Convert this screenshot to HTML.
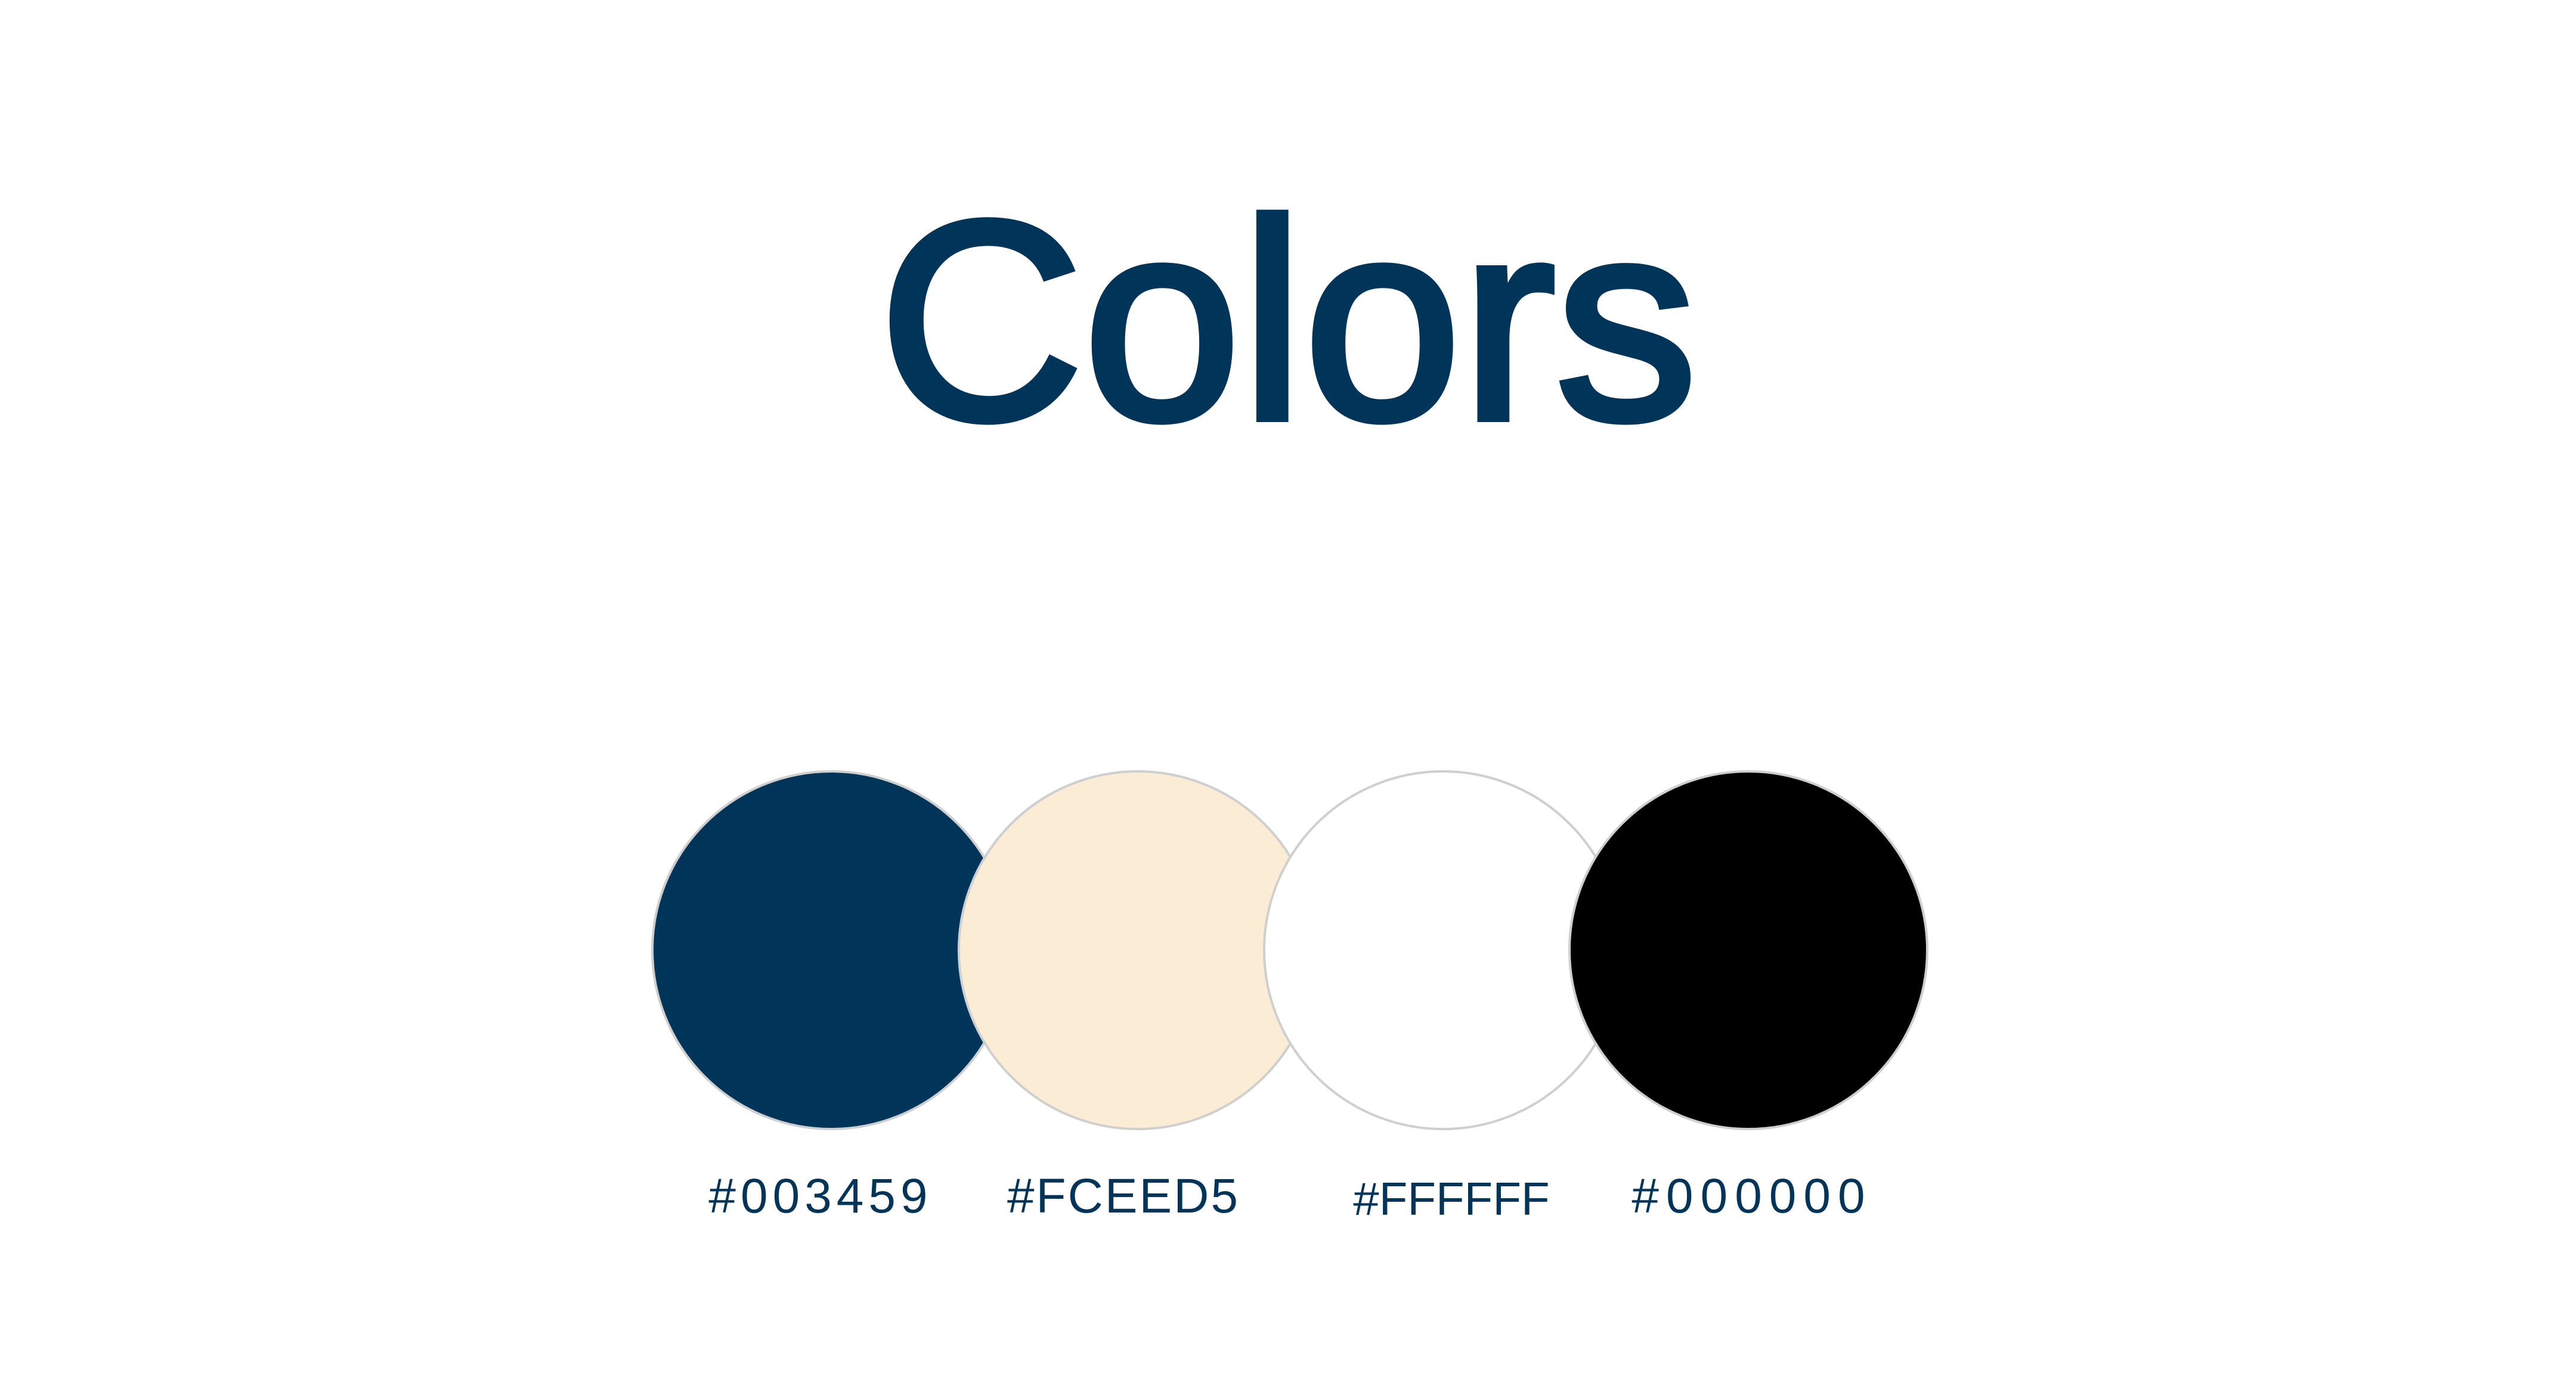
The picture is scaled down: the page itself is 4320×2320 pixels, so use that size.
<!DOCTYPE html>
<html><head><meta charset="utf-8"><style>
html,body{margin:0;padding:0;background:#fff;}
body{width:4320px;height:2320px;position:relative;overflow:hidden;font-family:"Liberation Sans",sans-serif;}
.t{position:absolute;left:0;width:4320px;top:300px;text-align:center;font-size:475px;font-weight:normal;color:#003459;-webkit-text-stroke:12px #003459;letter-spacing:0px;line-height:1;}
.c{position:absolute;width:596px;height:596px;border-radius:50%;border:4px solid #cfcfcf;top:1292px;}
.l{position:absolute;width:600px;text-align:center;color:#003459;font-size:82px;letter-spacing:8px;line-height:1;top:1966px;}
</style></head><body>
<div class="t">Colors</div>
<div class="c" style="left:1092px;background:#003459"></div>
<div class="c" style="left:1606px;background:#fbedd5"></div>
<div class="c" style="left:2118px;background:#fff"></div>
<div class="c" style="left:2630px;background:#000"></div>
<div class="l" style="left:1076px">#003459</div>
<div class="l" style="left:1584px;letter-spacing:3px">#FCEED5</div>
<div class="l" style="left:2134px;top:1972px;font-size:78px;letter-spacing:0px">#FFFFFF</div>
<div class="l" style="left:2638px;letter-spacing:12px">#000000</div>
</body></html>
